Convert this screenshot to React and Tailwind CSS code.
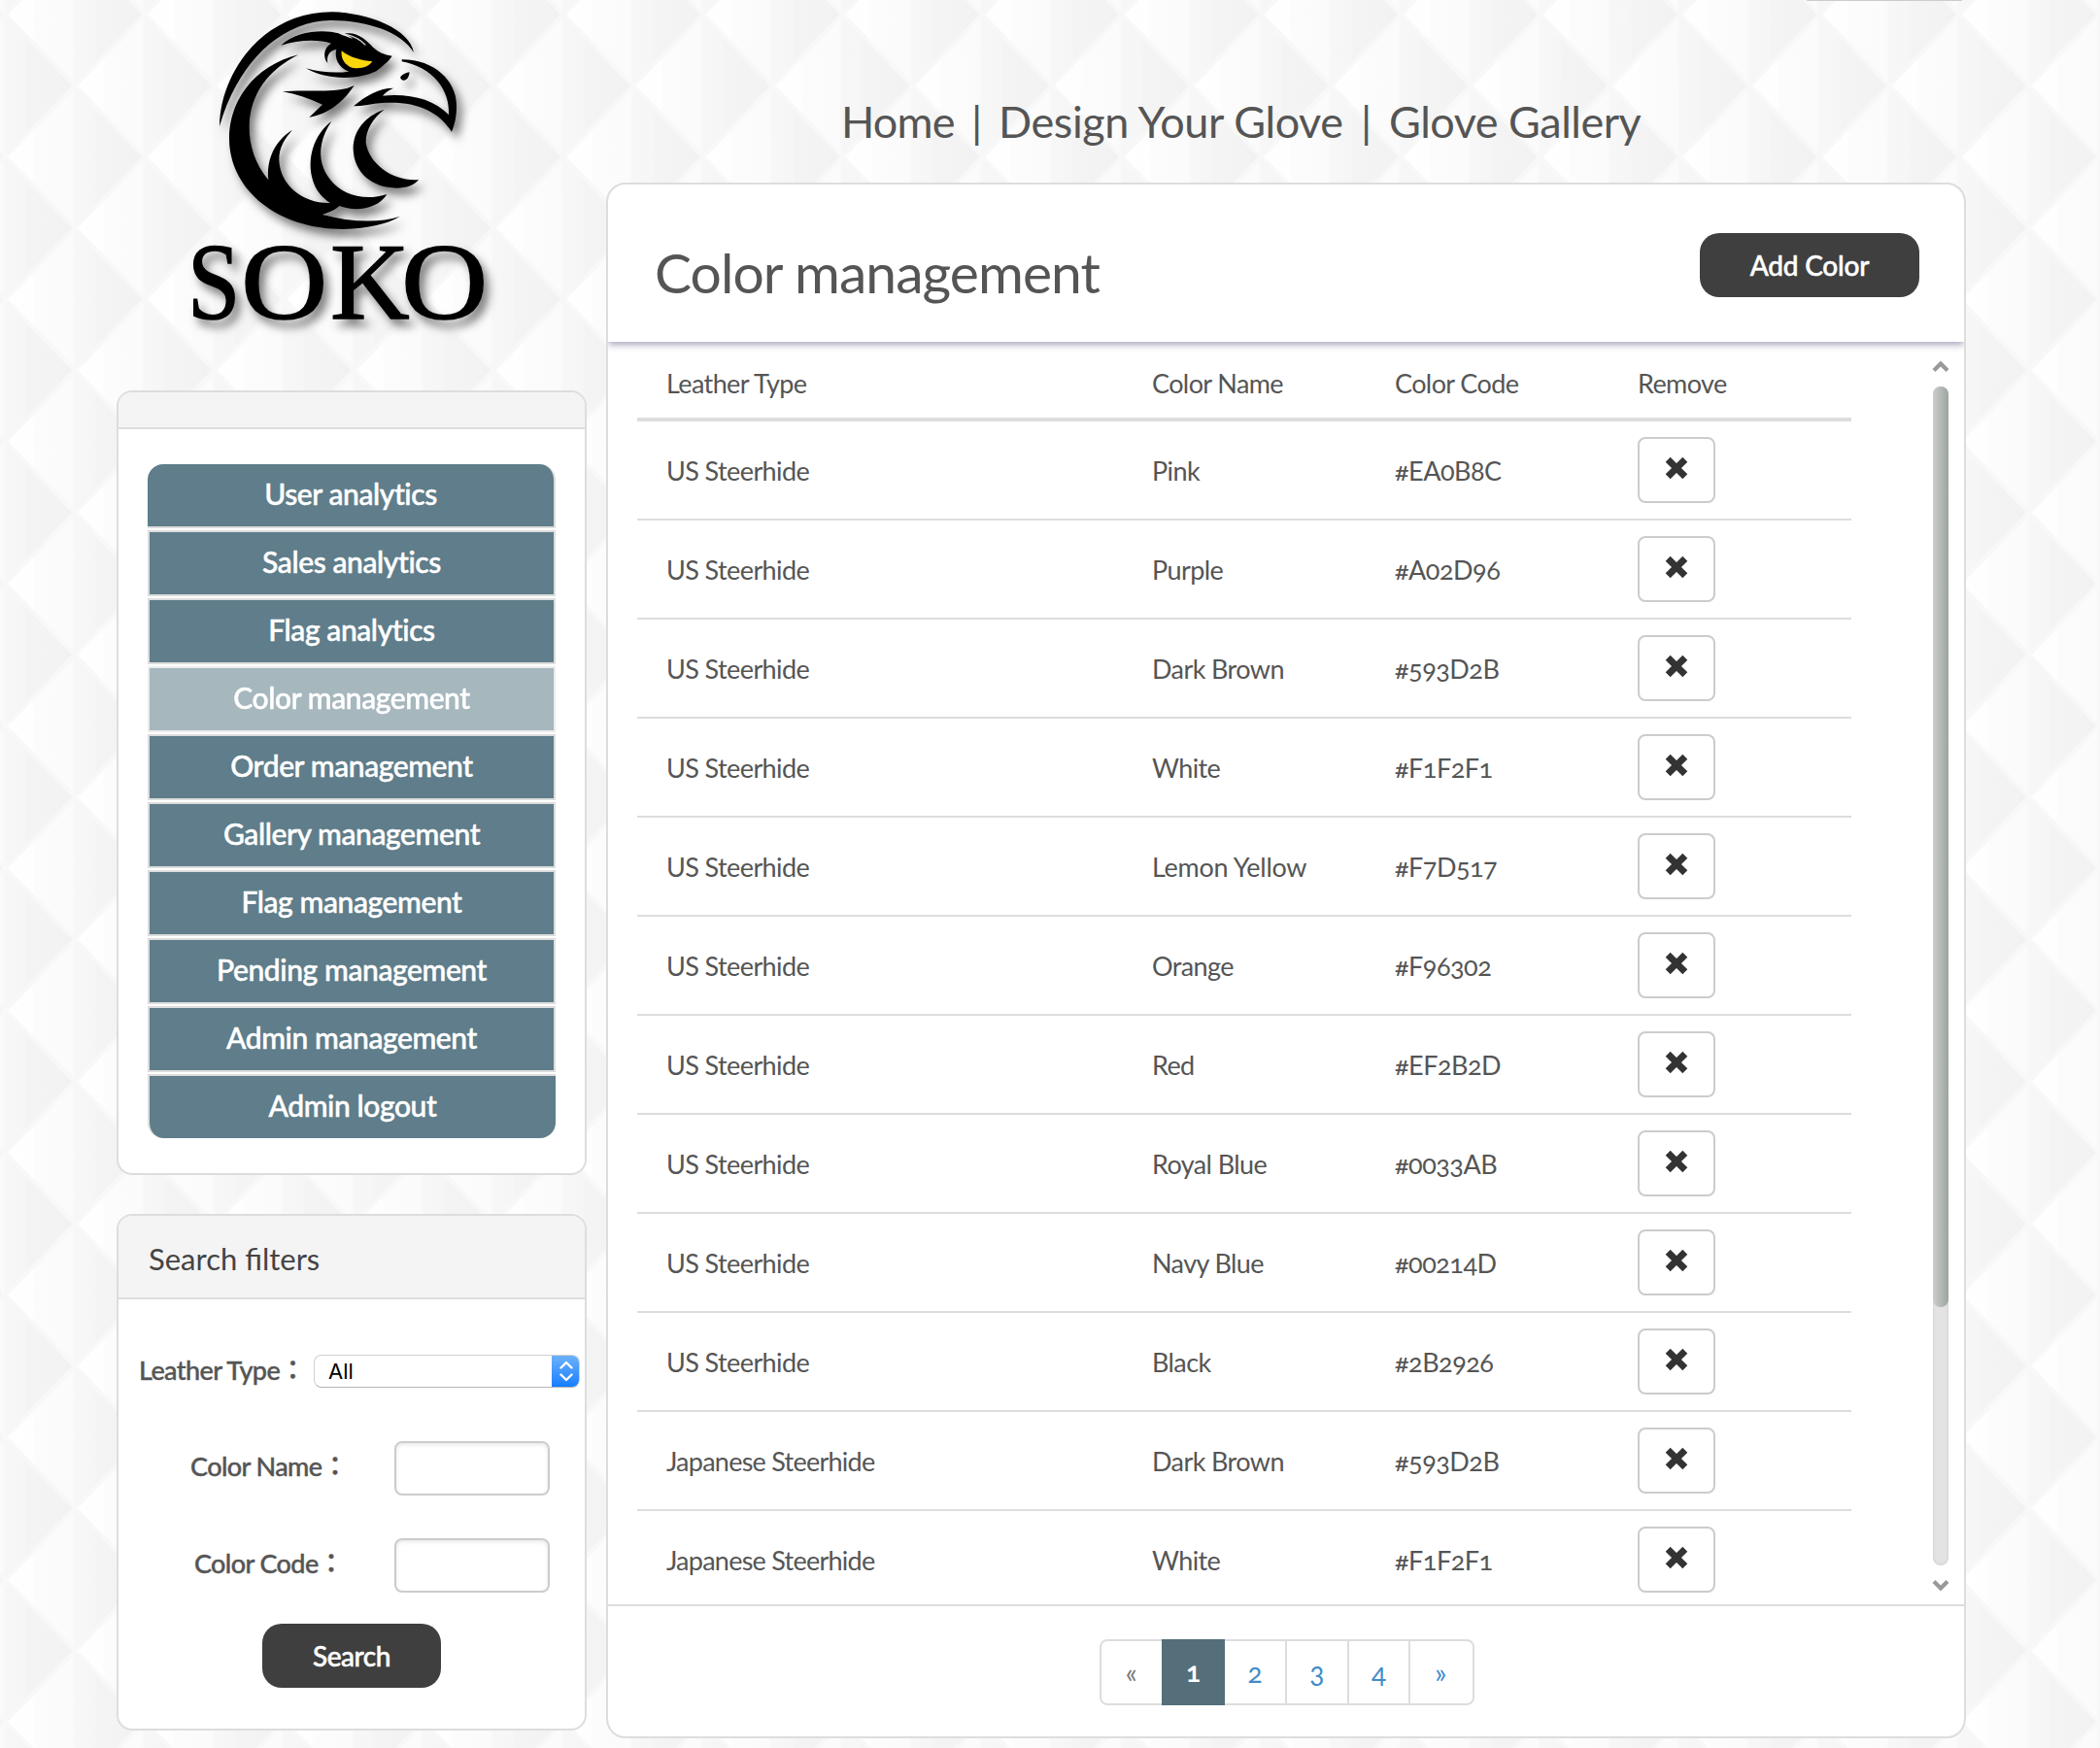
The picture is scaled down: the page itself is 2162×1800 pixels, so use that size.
const MENU = [
  "User analytics",
  "Sales analytics",
  "Flag analytics",
  "Color management",
  "Order management",
  "Gallery management",
  "Flag management",
  "Pending management",
  "Admin management",
  "Admin logout",
];

const COLORS = [
  ["US Steerhide", "Pink", "#EA0B8C"],
  ["US Steerhide", "Purple", "#A02D96"],
  ["US Steerhide", "Dark Brown", "#593D2B"],
  ["US Steerhide", "White", "#F1F2F1"],
  ["US Steerhide", "Lemon Yellow", "#F7D517"],
  ["US Steerhide", "Orange", "#F96302"],
  ["US Steerhide", "Red", "#EF2B2D"],
  ["US Steerhide", "Royal Blue", "#0033AB"],
  ["US Steerhide", "Navy Blue", "#00214D"],
  ["US Steerhide", "Black", "#2B2926"],
  ["Japanese Steerhide", "Dark Brown", "#593D2B"],
  ["Japanese Steerhide", "White", "#F1F2F1"],
];

/* Quilted diamond backdrop */
function Quilt() {
  return (
    <svg className="absolute inset-0 h-full w-full" aria-hidden="true">
      <defs>
        <linearGradient id="facet" x1="0" x2="1" y1="0" y2="0">
          <stop offset="0" stopColor="#ffffff" />
          <stop offset="0.2" stopColor="#fefefe" />
          <stop offset="0.22" stopColor="#fcfcfc" />
          <stop offset="0.48" stopColor="#fbfbfb" />
          <stop offset="0.5" stopColor="#f7f7f7" />
          <stop offset="0.64" stopColor="#f6f6f6" />
          <stop offset="0.66" stopColor="#f4f4f4" />
          <stop offset="0.88" stopColor="#f3f3f3" />
          <stop offset="1" stopColor="#f1f1f2" />
        </linearGradient>
        <pattern id="quilt" width="143.7" height="146.5" patternUnits="userSpaceOnUse" patternTransform="translate(5 15)">
          <rect width="143.7" height="146.5" fill="#f8f8f8" />
          <g fill="url(#facet)" stroke="#f8f8f8" strokeWidth="4">
            <path d="M0 0 71.85 -73.25 143.7 0 71.85 73.25Z" />
            <path d="M0 146.5 71.85 73.25 143.7 146.5 71.85 219.75Z" />
            <path d="M-71.85 73.25 0 0 71.85 73.25 0 146.5Z" />
            <path d="M71.85 73.25 143.7 0 215.55 73.25 143.7 146.5Z" />
          </g>
        </pattern>
      </defs>
      <rect width="100%" height="100%" fill="url(#quilt)" />
    </svg>
  );
}

function Logo() {
  return (
    <svg viewBox="0 0 1020 1080" className="ml-[60px] h-[360px] w-[340px] overflow-visible" role="img" aria-label="SOKO">
      <defs>
        <filter id="drop" x="-10%" y="-10%" width="125%" height="125%">
          <feDropShadow dx="16" dy="22" stdDeviation="14" floodColor="#000" floodOpacity="0.5" />
        </filter>
      </defs>
      <g filter="url(#drop)">
        <path d="M138 390C140 225 270 38 485 37C600 40 725 90 738 162C700 98 590 62 480 63C330 66 195 190 138 390Z" />
        <path d="M382 169C240 205 167 315 168 430C170 590 320 708 520 708C600 706 655 692 695 669C630 690 540 686 455 663C480 655 495 648 508 636C560 656 630 644 655 600C615 614 565 612 530 595C455 555 420 470 484 374C430 415 405 490 427 560C437 590 455 610 480 627C400 630 325 575 322 495C321 455 340 428 363 401C310 435 282 490 289 556C250 510 229 450 230 390C232 290 290 215 382 169Z" />
        <path d="M647 338C585 360 551 405 551 460C553 535 610 580 685 581C715 581 740 572 753 555C680 562 600 510 590 440C589 400 615 362 647 338Z" />
        <path d="M328 140C375 95 460 90 505 103C545 120 570 128 525 104C560 96 590 122 612 146C630 162 645 168 671 173C660 190 640 205 622 220C560 250 465 246 405 211C450 224 500 226 538 221C505 208 492 180 499 152C478 156 468 172 472 195C455 175 462 145 483 134C440 120 380 124 328 140Z" />
        <path d="M528 106C556 112 575 124 589 139" fill="none" stroke="#d8d8d8" strokeWidth="4" />
        <path d="M515 157C540 178 580 188 610 190C597 210 562 216 540 206C520 195 513 177 515 157Z" fill="#fcd611" />
        <path d="M333 283C410 274 500 292 554 264C522 312 478 352 415 362L456 323C415 305 375 290 333 283Z" />
        <path d="M701 184C800 183 870 250 870 325C871 355 865 385 855 407C812 340 740 311 640 318C610 320 580 328 552 328C590 295 632 272 675 272C658 279 648 289 642 296C720 288 800 305 846 355C850 275 795 208 701 190Z" />
        <path d="M697 237C705 228 715 225 725 223C723 240 715 250 705 248C698 246 696 240 697 237Z" />
        <g fontFamily="'Liberation Serif', serif" fontSize="338" stroke="#000" strokeWidth="4">
          <text x="39" y="984" textLength="163" lengthAdjust="spacingAndGlyphs">S</text>
          <text x="204" y="984" textLength="268" lengthAdjust="spacingAndGlyphs">O</text>
          <text x="480" y="984" textLength="245" lengthAdjust="spacingAndGlyphs">K</text>
          <text x="699" y="984" textLength="268" lengthAdjust="spacingAndGlyphs">O</text>
        </g>
      </g>
    </svg>
  );
}

function Menu() {
  return (
    <section className="h-[808px] shrink-0 overflow-hidden rounded-[16px] border-2 border-[#ddd] bg-white">
      <div className="h-[38px] border-b-2 border-[#ddd] bg-[#f4f4f4]" />
      <ul className="mx-[30px] mt-9 flex flex-col gap-[2px] text-[30px] font-medium tracking-[-0.4px] text-white [-webkit-text-stroke:0.5px_#fff]">
        {MENU.map((label, i) => {
          const shape =
            i === 0
              ? "h-[66px] rounded-t-[16px] border-r-2 border-b-2"
              : i === MENU.length - 1
                ? "h-[66px] rounded-b-[16px] border-l-2 border-t-2"
                : "h-[68px] border-2";
          const active = label === "Color management" ? "opacity-55" : "";
          return (
            <li key={label} className={`flex items-center justify-center border-[#ddd] bg-[#5f7d8a] pb-[4px] ${shape} ${active}`}>
              {label}
            </li>
          );
        })}
      </ul>
    </section>
  );
}

const FIELD =
  "h-[56px] w-[160px] rounded-[8px] border-2 border-[#ccc] bg-white shadow-[inset_0_2px_4px_rgba(0,0,0,0.09)] outline-none";

function Filters() {
  return (
    <section className="mt-10 h-[532px] shrink-0 overflow-hidden rounded-[16px] border-2 border-[#ddd] bg-white">
      <h2 className="flex h-[86px] items-center border-b-2 border-[#ddd] bg-[#f4f4f4] pt-[4px] pl-[31px] text-[31px] text-[#444]">
        Search filters
      </h2>
      <div className="text-[27px] font-medium tracking-[-0.6px] text-[#555] [-webkit-text-stroke:0.4px_#555]">
        <div className="mt-[57px] flex h-[34px] items-center pl-[21px]">
          <label className="w-[180px] whitespace-nowrap pb-[2px]">Leather Type：</label>
          <div className="flex h-[34px] w-[274px] items-stretch justify-between overflow-hidden rounded-[8px] border border-[#d0d0d0] border-b-[#b5b5b5] bg-white">
            <span className="flex items-center pl-[14px] font-[Inter] text-[22px] font-normal tracking-normal text-black [-webkit-text-stroke:0]">All</span>
            <span className="-m-px flex w-[29px] items-center justify-center bg-linear-to-b from-[#6cb3fa] to-[#0a7aff]">
              <svg viewBox="0 0 14 22" className="h-[22px] w-[14px]" fill="none" stroke="#fff" strokeWidth="2.4" strokeLinecap="round" strokeLinejoin="round">
                <path d="M1.500 7.500 7 2l5.500 5.500M1.500 14.500 7 20l5.500-5.500" />
              </svg>
            </span>
          </div>
        </div>
        <div className="mt-[55px] flex items-center pl-[55px]">
          <label className="w-[200px] pb-[3px] text-center whitespace-nowrap">Color Name：</label>
          <input className={`ml-[29px] ${FIELD}`} />
        </div>
        <div className="mt-11 flex items-center pl-[55px]">
          <label className="w-[200px] pb-[3px] text-center whitespace-nowrap">Color Code：</label>
          <input className={`ml-[29px] ${FIELD}`} />
        </div>
      </div>
      <button className="mx-auto mt-8 flex h-[66px] w-[184px] items-center justify-center rounded-[20px] bg-[#3f3f3f] text-[28px] font-medium tracking-[-0.5px] text-white [-webkit-text-stroke:0.5px_#fff]">
        Search
      </button>
    </section>
  );
}

const GRID = "grid grid-cols-[500px_250px_250px_250px] pl-[30px] items-center";

function Scrollbar() {
  return (
    <div className="flex w-4 flex-col items-center pt-[17px]">
      <svg viewBox="0 0 18 12" className="h-3 w-[18px]" fill="none" stroke="#999" strokeWidth="4.200">
        <path d="M2 10.500 9 3.500l7 7" />
      </svg>
      <div className="mt-[15px] h-[1214px] w-4 rounded-full bg-[#e3e3e3] shadow-[inset_0_0_3px_rgba(0,0,0,0.15)]">
        <div className="h-[948px] w-4 rounded-full bg-linear-to-r from-[#cbcfcc] to-[#9da49f]" />
      </div>
      <svg viewBox="0 0 18 12" className="mt-[15px] h-3 w-[18px]" fill="none" stroke="#999" strokeWidth="4.200">
        <path d="M2 1.500 9 8.500l7-7" />
      </svg>
    </div>
  );
}

function ColorTable() {
  return (
    <div className="flex h-[1302px] overflow-hidden border-b-2 border-[#ddd] pt-[2px] pl-[30px]">
      <div className="w-[1250px] text-[27px] tracking-[-0.6px] text-[#555]">
        <div className={`h-[80px] border-b-4 border-[#ddd] pt-[6px] ${GRID}`}>
          <span>Leather Type</span>
          <span>Color Name</span>
          <span>Color Code</span>
          <span>Remove</span>
        </div>
        {COLORS.map(([leather, name, code], i) => (
          <div key={i} className={`h-[102px] border-b-2 border-[#ddd] ${GRID}`}>
            <span className={`pt-[2px] ${leather.startsWith("J") ? "tracking-[-0.75px]" : ""}`}>{leather}</span>
            <span className={`pt-[2px] ${name === "Lemon Yellow" ? "tracking-[-0.3px]" : ""}`}>{name}</span>
            <span className="pt-[2px] tracking-[-0.5px] oldstyle-nums">{code}</span>
            <button className="flex h-[68px] w-[80px] items-center justify-center rounded-[8px] border-2 border-[#ccc] bg-white pb-1" aria-label="Remove">
              <svg viewBox="0 0 24 24" className="h-6 w-6">
                <path d="M3.200 3.200 20.800 20.800M20.800 3.200 3.200 20.800" stroke="#333" strokeWidth="7" />
              </svg>
            </button>
          </div>
        ))}
      </div>
      <div className="ml-[84px]">
        <Scrollbar />
      </div>
    </div>
  );
}

function Pagination() {
  const cell = "flex h-full items-center justify-center";
  return (
    <nav className="mt-[34px] ml-[506px] flex h-[68px] w-[386px] rounded-[8px] border-2 border-[#ddd] pr-[2px] text-[28px] text-[#428bca] oldstyle-nums">
      <span className={`${cell} w-[62px] text-[#777]`}>«</span>
      <span className="-my-[2px] flex w-[66px] items-center justify-center bg-[#546e7a] pb-[2px] font-bold text-white">1</span>
      <span className={`${cell} w-[64px] border-r-2 border-[#ddd]`}>2</span>
      <span className={`${cell} w-[64px] border-r-2 border-[#ddd]`}>3</span>
      <span className={`${cell} w-[64px] border-r-2 border-[#ddd]`}>4</span>
      <span className={`${cell} w-[62px]`}>»</span>
    </nav>
  );
}

export default function App() {
  return (
    <div className="relative h-[1800px] w-[2162px] overflow-hidden bg-[#f8f8f8] font-[Lato,'Noto_Sans_CJK_TC',sans-serif]">
      <Quilt />
      <div className="absolute top-0 left-[1860px] h-px w-[160px] rounded-b-[2px] bg-[#ccc]" />
      <div className="relative flex pl-[120px]">
        <aside className="flex w-[484px] flex-col">
          <div className="h-[402px]">
            <Logo />
          </div>
          <Menu />
          <Filters />
        </aside>
        <main className="ml-5 w-[1400px]">
          <nav className="flex h-[188px] pt-[95px] pl-[242px] text-[45px] leading-[60px] tracking-[-0.5px] whitespace-pre text-[#555]">
            <span className="w-[134px] tracking-[-0.8px]">Home</span>
            <span className="w-[28px]">|</span>
            <span className="w-[373px] tracking-[-0.4px]">Design Your Glove</span>
            <span className="w-[29px]">|</span>
            <span>Glove Gallery</span>
          </nav>
          <section className="h-[1602px] overflow-hidden rounded-[20px] border-2 border-[#ddd] bg-white">
            <header className="relative flex h-[162px] items-start justify-between pr-[46px] pl-12 shadow-[0_3px_7px_rgba(60,60,110,0.45)]">
              <h1 className="mt-[60px] text-[57px] leading-[60px] tracking-[-0.95px] text-[#555]">Color management</h1>
              <button className="mt-[50px] flex h-[66px] w-[226px] items-center justify-center rounded-[20px] bg-[#3f3f3f] text-[28px] font-medium tracking-[-0.2px] text-white [-webkit-text-stroke:0.5px_#fff]">
                Add Color
              </button>
            </header>
            <ColorTable />
            <Pagination />
          </section>
        </main>
      </div>
    </div>
  );
}
